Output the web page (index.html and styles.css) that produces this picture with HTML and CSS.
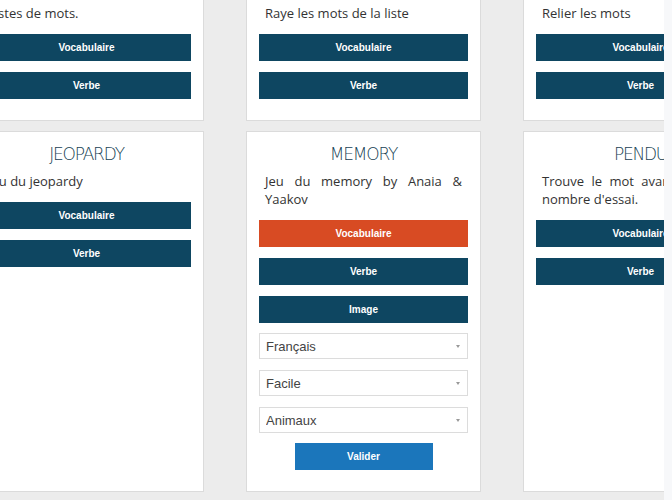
FILE: index.html
```html
<!DOCTYPE html>
<html lang="fr">
<head>
<meta charset="utf-8">
<title>Jeux</title>
<link rel="stylesheet" href="styles.css">
</head>
<body>
<div class="viewport">
  <div class="grid">
    <section class="card">
      <h2 class="title">MOTS MÊLÉS</h2>
      <p class="desc">Listes de mots.</p>
      <div class="actions">
        <a class="btn">Vocabulaire</a>
        <a class="btn">Verbe</a>
      </div>
    </section>
    <section class="card">
      <h2 class="title">MOTS CACHÉS</h2>
      <p class="desc">Raye les mots de la liste</p>
      <div class="actions">
        <a class="btn">Vocabulaire</a>
        <a class="btn">Verbe</a>
      </div>
    </section>
    <section class="card">
      <h2 class="title">RELIER</h2>
      <p class="desc">Relier les mots</p>
      <div class="actions">
        <a class="btn">Vocabulaire</a>
        <a class="btn">Verbe</a>
      </div>
    </section>

    <section class="card">
      <h2 class="title">JEOPARDY</h2>
      <p class="desc">Jeu du jeopardy</p>
      <div class="actions">
        <a class="btn">Vocabulaire</a>
        <a class="btn">Verbe</a>
      </div>
    </section>
    <section class="card">
      <h2 class="title">MEMORY</h2>
      <p class="desc">Jeu du memory by Anaia &amp; Yaakov</p>
      <div class="actions">
        <a class="btn btn-active">Vocabulaire</a>
        <a class="btn">Verbe</a>
        <a class="btn">Image</a>
      </div>
      <div class="selects">
        <div class="select-wrap">
          <select class="select"><option>Français</option></select>
          <span class="caret"></span>
        </div>
        <div class="select-wrap">
          <select class="select"><option>Facile</option></select>
          <span class="caret"></span>
        </div>
        <div class="select-wrap">
          <select class="select"><option>Animaux</option></select>
          <span class="caret"></span>
        </div>
      </div>
      <div class="submit-row">
        <a class="btn btn-submit">Valider</a>
      </div>
    </section>
    <section class="card">
      <h2 class="title">PENDU</h2>
      <p class="desc">Trouve le mot avant la fin du nombre d'essai.</p>
      <div class="actions">
        <a class="btn">Vocabulaire</a>
        <a class="btn">Verbe</a>
      </div>
    </section>
  </div>
</div>
</body>
</html>
```
FILE: styles.css
```css
html, body {
  margin: 0;
  padding: 0;
}
body {
  background: #f7f8fa;
  width: 672px;
  height: 500px;
  overflow: hidden;
}
.viewport {
  width: 664px;
  height: 500px;
  overflow: hidden;
  background: #ececec;
}
.grid {
  display: grid;
  grid-template-columns: repeat(3, 235px);
  column-gap: 42px;
  row-gap: 10px;
  margin-top: -37px;
  margin-left: -31px;
  width: 789px;
}
.card {
  background: #fff;
  border: 1px solid #dbdbdb;
  padding: 12px 12px 21px;
  box-sizing: border-box;
}
.title {
  margin: 0 0 7px;
  font-family: "DejaVu Sans", "Liberation Sans", sans-serif;
  font-weight: 200;
  font-size: 17px;
  letter-spacing: -1.2px;
  line-height: 21px;
  text-align: center;
  color: #173f54;
}
.desc {
  margin: 0 0 12px;
  padding: 0 6px;
  font-family: "Open Sans", "Liberation Sans", sans-serif;
  font-size: 13px;
  line-height: 18px;
  text-align: justify;
  color: #333;
}
.actions {
  display: flex;
  flex-direction: column;
  gap: 11px;
}
.btn {
  display: block;
  height: 27px;
  line-height: 27px;
  text-align: center;
  background: #0e4661;
  color: #fff;
  font-family: "Liberation Sans", Arial, sans-serif;
  font-weight: bold;
  font-size: 10px;
}
.btn-active {
  background: #d84b23;
}
.selects {
  display: flex;
  flex-direction: column;
  gap: 11px;
  margin-top: 10px;
}
.select-wrap {
  position: relative;
  height: 26px;
}
.select {
  appearance: none;
  -webkit-appearance: none;
  display: block;
  width: 100%;
  height: 26px;
  margin: 0;
  padding: 0 20px 0 6px;
  border: 1px solid #dcdcdc;
  border-radius: 0;
  background: #fff;
  font-family: "Liberation Sans", Arial, sans-serif;
  font-size: 13px;
  color: #444;
  box-sizing: border-box;
}
.caret {
  position: absolute;
  right: 8px;
  top: 12px;
  width: 0;
  height: 0;
  border-left: 2px solid transparent;
  border-right: 2px solid transparent;
  border-top: 3px solid #999;
  pointer-events: none;
}
.submit-row {
  display: flex;
  justify-content: center;
  margin-top: 10px;
}
.btn-submit {
  width: 138px;
  background: #1b76bb;
}
```
